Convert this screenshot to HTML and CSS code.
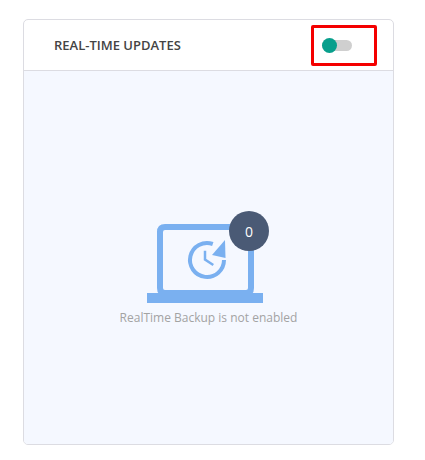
FILE: index.html
```html
<!DOCTYPE html>
<html lang="en">
<head>
    <meta charset="UTF-8">
    <meta name="viewport" content="width=device-width, initial-scale=1.0">
    <title>Real-Time Updates</title>
    <link rel="stylesheet" href="styles.css">
</head>
<body>
    <div class="card">
        <div class="card-header">
            <h2 class="card-title">REAL-TIME UPDATES</h2>
            <div class="highlight">
                <div class="toggle">
                    <span class="toggle-knob"></span>
                </div>
            </div>
        </div>

        <div class="card-body">
            <div class="laptop">
                <svg class="laptop-icon" width="116" height="79" viewBox="0 0 116 79" fill="none">
                    <path d="M18 69 Q13 69 13 64 V8 Q13 3 18 3 H99 Q104 3 104 8 V64 Q104 69 99 69 Z" stroke="#7ab0f0" stroke-width="6"/>
                    <rect x="0" y="69" width="116" height="10" fill="#7ab0f0"/>
                    <path d="M65.8 20 A17 17 0 1 0 77 36" stroke="#7ab0f0" stroke-width="4"/>
                    <path d="M78 16 L65 31 L78.5 34 Z" fill="#7ab0f0"/>
                    <path d="M58 26.7 V35.5 L66.3 41" stroke="#7ab0f0" stroke-width="2.5"/>
                </svg>
                <div class="badge">0</div>
            </div>
            <p class="empty-text">RealTime Backup is not enabled</p>
        </div>
    </div>
</body>
</html>
```

FILE: styles.css
```css
:root {
    --border: #dcdce2;
    --blue: #7ab0f0;
    --panel: #f5f8ff;
}

body {
    font-family: 'Open Sans', 'Noto Sans', sans-serif;
    background-color: white;
    margin: 0;
    padding: 19px 31px 15px 23px;
}

.card {
    height: 426px;
    box-sizing: border-box;
    border: 1px solid var(--border);
    border-radius: 5px;
    overflow: hidden;
    display: flex;
    flex-direction: column;
}

.card-header {
    height: 51px;
    flex-shrink: 0;
    box-sizing: border-box;
    border-bottom: 1px solid var(--border);
    display: flex;
    align-items: center;
    justify-content: space-between;
    padding: 0 16px 0 30px;
}

.card-title {
    margin: 0;
    font-size: 13px;
    font-weight: 600;
    color: #444444;
}

.highlight {
    width: 66px;
    height: 41px;
    box-sizing: border-box;
    border: 3px solid #f40000;
    border-radius: 2px;
    padding-left: 8px;
    display: flex;
    align-items: center;
}

.toggle {
    width: 30px;
    height: 11px;
    background-color: #cfcfcf;
    border-radius: 6px;
    display: flex;
    align-items: center;
}

.toggle-knob {
    width: 15px;
    height: 15px;
    border-radius: 50%;
    background-color: #089f8c;
}

.card-body {
    flex: 1;
    background-color: var(--panel);
    display: flex;
    flex-direction: column;
    align-items: center;
    padding-top: 153px;
}

.laptop {
    position: relative;
    width: 116px;
    height: 79px;
    margin-right: 7px;
}

.laptop-icon {
    display: block;
}

.badge {
    position: absolute;
    top: -13px;
    left: 82px;
    width: 40px;
    height: 40px;
    border-radius: 50%;
    background-color: #4a5a75;
    color: white;
    font-size: 14px;
    display: flex;
    align-items: center;
    justify-content: center;
}

.empty-text {
    margin: 6px 0 0;
    font-size: 12px;
    line-height: 18px;
    color: #a3a3a3;
}
```
